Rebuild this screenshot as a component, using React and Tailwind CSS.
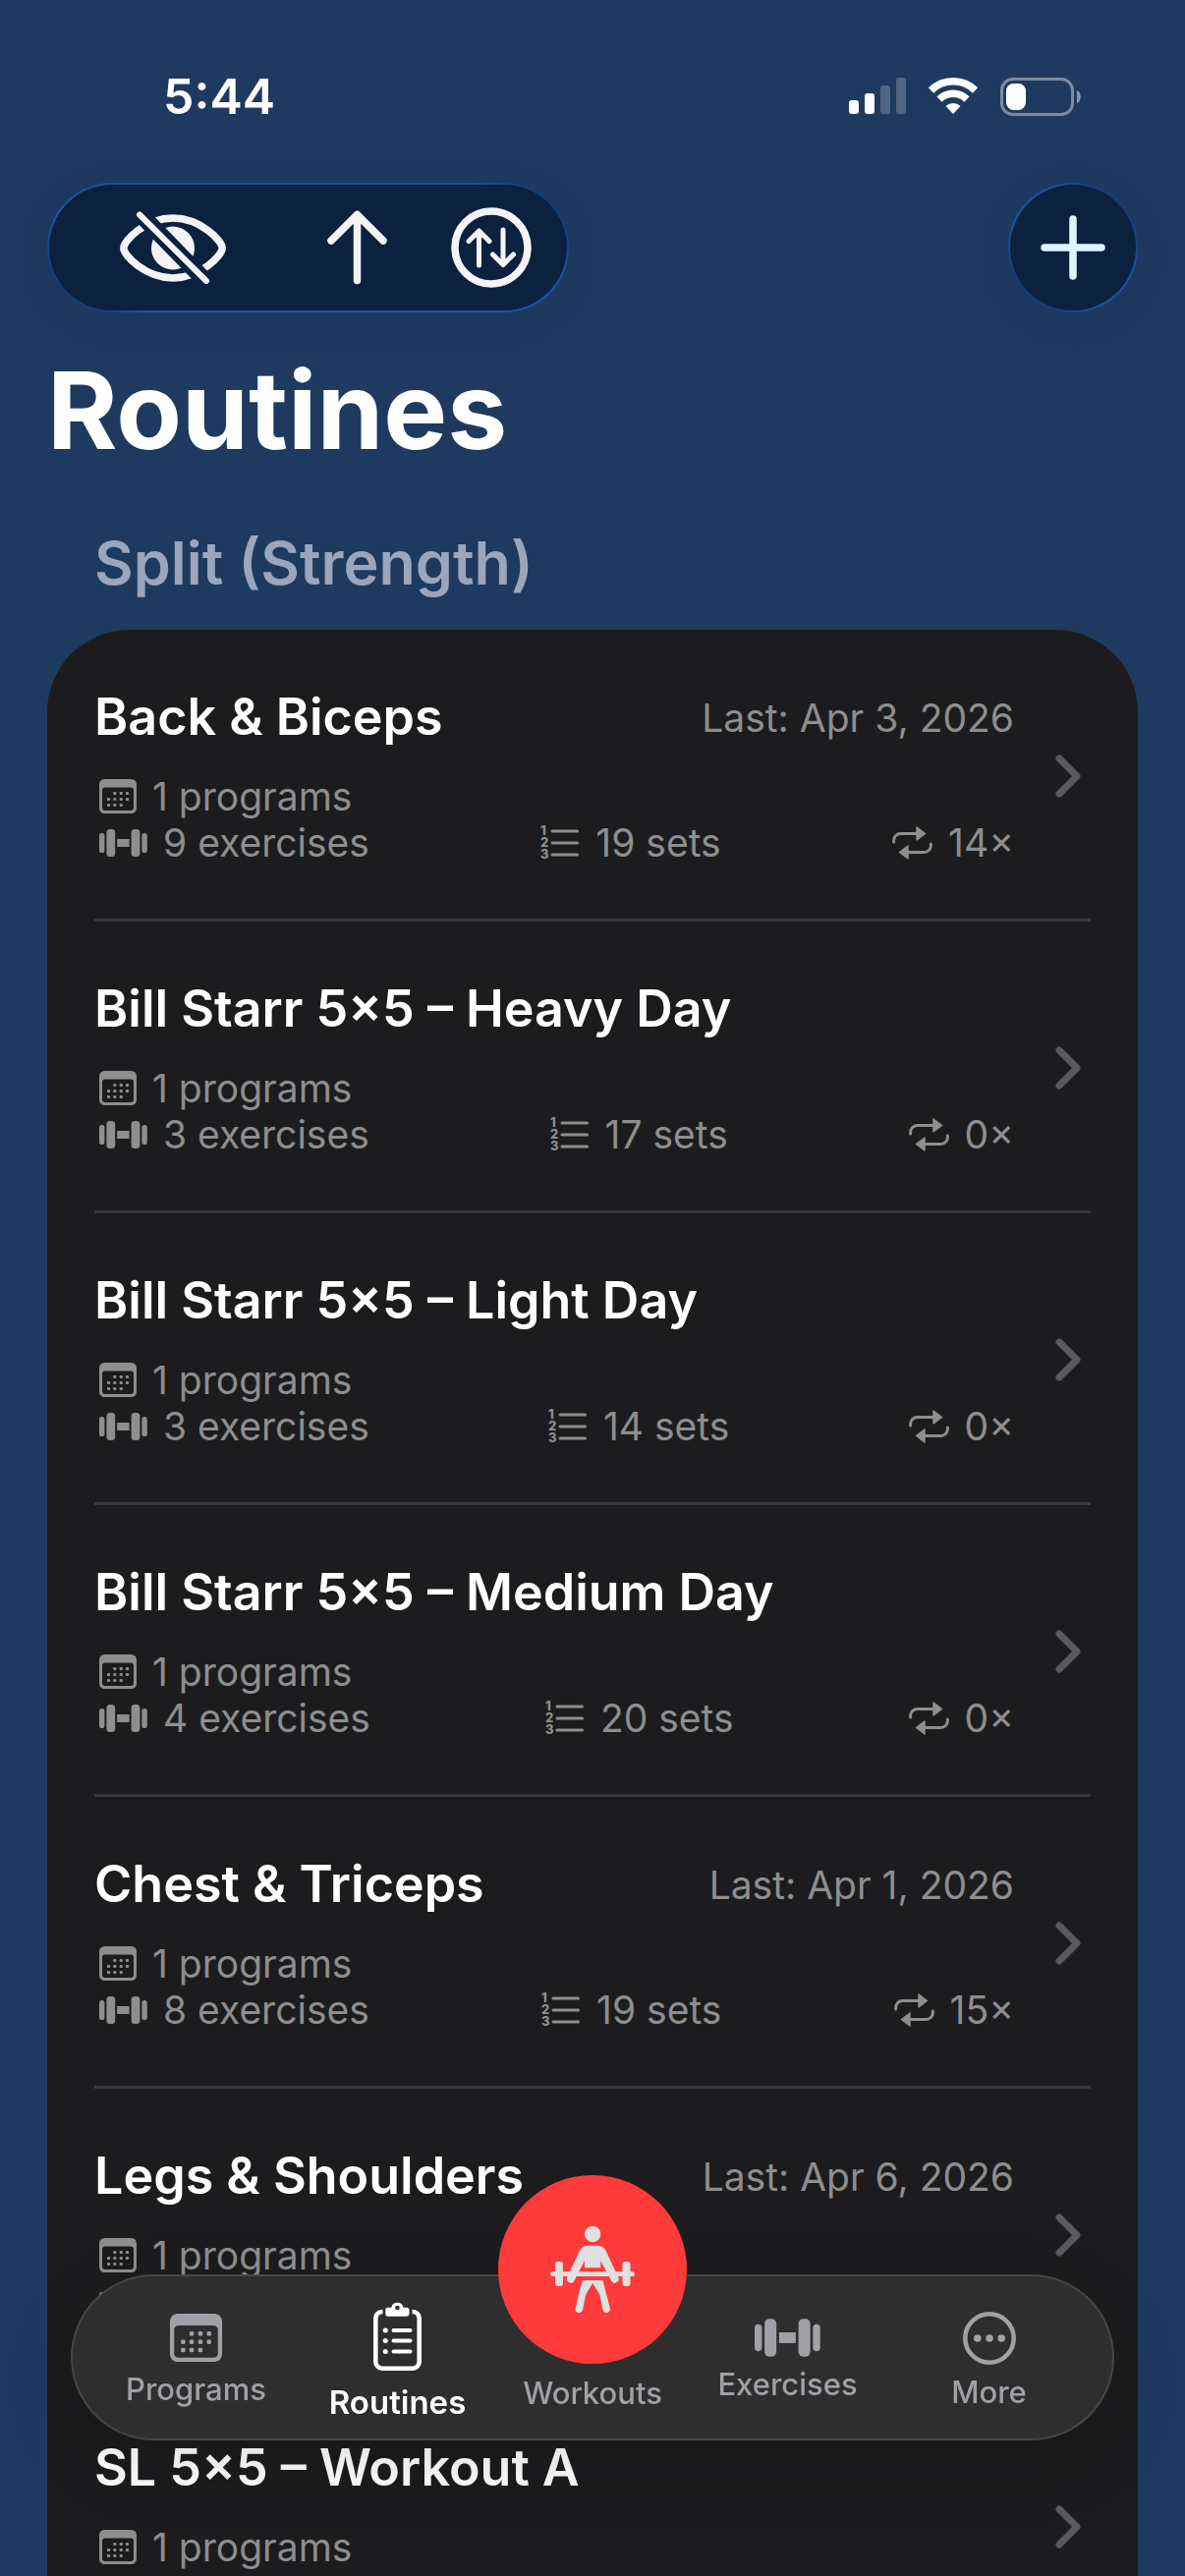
import clsx from 'clsx'

const routines = [
  { name: 'Back & Biceps', last: 'Apr 3, 2026', programs: 1, exercises: 9, sets: 19, done: 14 },
  { name: 'Bill Starr 5×5 – Heavy Day', programs: 1, exercises: 3, sets: 17, done: 0 },
  { name: 'Bill Starr 5×5 – Light Day', programs: 1, exercises: 3, sets: 14, done: 0 },
  { name: 'Bill Starr 5×5 – Medium Day', programs: 1, exercises: 4, sets: 20, done: 0 },
  { name: 'Chest & Triceps', last: 'Apr 1, 2026', programs: 1, exercises: 8, sets: 19, done: 15 },
  { name: 'Legs & Shoulders', last: 'Apr 6, 2026', programs: 1 },
  { name: 'SL 5×5 – Workout A', programs: 1 },
]

function CalendarIcon({ className }) {
  const dots = [
    [15.8, 14.5], [22.2, 14.5], [28.5, 14.5],
    [9.6, 20.5], [15.8, 20.5], [22.2, 20.5], [28.5, 20.5],
    [9.6, 26.5], [15.8, 26.5], [22.2, 26.5],
  ]
  return (
    <svg viewBox="0 0 38 35" className={className} fill="currentColor" aria-hidden="true">
      <path
        fillRule="evenodd"
        d="M5.5 0h27A5.5 5.5 0 0 1 38 5.5v24a5.5 5.5 0 0 1-5.5 5.5h-27A5.5 5.5 0 0 1 0 29.5v-24A5.5 5.5 0 0 1 5.5 0ZM6 8.500a3 3 0 0 0-3 3V29a3 3 0 0 0 3 3h26a3 3 0 0 0 3-3V11.500a3 3 0 0 0-3-3Z"
      />
      {dots.map(([x, y]) => (
        <rect key={`${x}-${y}`} x={x - 1.6} y={y - 1.6} width="3.2" height="3.2" rx="1" />
      ))}
    </svg>
  )
}

function DumbbellIcon({ className }) {
  return (
    <svg viewBox="0 0 49 28" className={className} fill="currentColor" aria-hidden="true">
      <rect x="0" y="4" width="5.4" height="20" rx="2.6" />
      <rect x="7.4" y="0" width="8.8" height="28" rx="3.5" />
      <rect x="18.2" y="10" width="12.4" height="8" />
      <rect x="32.6" y="0" width="8.8" height="28" rx="3.5" />
      <rect x="43.4" y="4" width="5.4" height="20" rx="2.6" />
    </svg>
  )
}

function NumberedListIcon({ className }) {
  return (
    <svg viewBox="0 0 40 34" overflow="visible" className={className} fill="currentColor" aria-hidden="true">
      <g fontFamily="Inter, sans-serif" fontSize="13" fontWeight="800">
        <text x="0" y="9">1</text>
        <text x="0" y="21">2</text>
        <text x="0" y="33">3</text>
      </g>
      <path d="M12 5h25.5M12 17h25.5M12 29h25.5" stroke="currentColor" strokeWidth="3" strokeLinecap="round" />
    </svg>
  )
}

function RepeatIcon({ className }) {
  return (
    <svg viewBox="0 0 41 34" className={className} aria-hidden="true">
      <path
        d="M1.6 16V14.5a7 7 0 0 1 7-7H25M39.4 18V19.5a7 7 0 0 1-7 7H16"
        fill="none"
        stroke="currentColor"
        strokeWidth="3"
        strokeLinecap="round"
      />
      <path
        d="M25 1v13l8.5-6.5ZM16 20v13l-8.5-6.5Z"
        fill="currentColor"
        stroke="currentColor"
        strokeWidth="1.5"
        strokeLinejoin="round"
      />
    </svg>
  )
}

function ChevronIcon() {
  return (
    <svg viewBox="0 0 46 46" className="h-[46px] w-[46px] shrink-0 text-[#5a5a5e]" aria-hidden="true">
      <path d="M14 5l18 18-18 18" fill="none" stroke="currentColor" strokeWidth="7" strokeLinecap="round" strokeLinejoin="round" />
    </svg>
  )
}

function EyeSlashIcon() {
  return (
    <svg viewBox="0 0 108 74" className="h-[74px] w-[108px]" fill="none" aria-hidden="true">
      <path d="M3.8 37.5C3.8 30 26 7 54 7s50.200 23 50.200 30.500S82 68 54 68 3.800 45 3.800 37.500Z" stroke="#f3f4f7" strokeWidth="7.5" />
      <circle cx="54" cy="37.5" r="22" fill="#f3f4f7" />
      <path d="M14-4l80 82" stroke="#0c213d" strokeWidth="17" />
      <path d="M20 3.500l68 67.500" stroke="#f3f4f7" strokeWidth="6" strokeLinecap="round" />
    </svg>
  )
}

function ArrowUpIcon() {
  return (
    <svg viewBox="0 0 61 76" className="h-[76px] w-[61px]" fill="none" aria-hidden="true">
      <path d="M30.5 71.5V4.5M4 31L30.5 4.5 57 31" stroke="#f3f4f7" strokeWidth="7.5" strokeLinecap="round" strokeLinejoin="round" />
    </svg>
  )
}

function SortIcon() {
  return (
    <svg viewBox="0 0 82 82" className="h-[82px] w-[82px]" fill="none" stroke="#f3f4f7" aria-hidden="true">
      <circle cx="41" cy="41" r="37" strokeWidth="7.5" />
      <path
        d="M28.5 59V24M18 34.5L28.5 24 39 34.5M53 23v35M42.5 48L53 58.5 63.5 48"
        strokeWidth="5"
        strokeLinecap="round"
        strokeLinejoin="round"
      />
    </svg>
  )
}

function ClipboardIcon({ className }) {
  return (
    <svg viewBox="0 0 49 70" className={className} fill="none" aria-hidden="true">
      <path
        d="M9.5 10H9a6.700 6.700 0 0 0-6.700 6.700V61A6.700 6.700 0 0 0 9 67.700h31A6.700 6.700 0 0 0 46.700 61V16.700A6.700 6.700 0 0 0 40 10h-.5"
        stroke="currentColor"
        strokeWidth="4.6"
      />
      <path
        fillRule="evenodd"
        d="M18.3 5.8a6.2 6.2 0 0 1 12.2 0H34a2.5 2.5 0 0 1 2.5 2.5v3.7a2.7 2.7 0 0 1-2.7 2.7H15a2.7 2.7 0 0 1-2.7-2.7V8.3A2.5 2.5 0 0 1 14.800 5.800ZM24.400 3.700a2.300 2.300 0 1 0 0 4.600 2.300 2.300 0 0 0 0-4.600Z"
        fill="currentColor"
      />
      <path d="M20.5 29h17M20.5 39.5h17M20.5 50.5h17" stroke="currentColor" strokeWidth="4" strokeLinecap="round" />
      <path d="M12.2 29h.1M12.2 39.5h.1M12.2 50.5h.1" stroke="currentColor" strokeWidth="5" strokeLinecap="round" />
    </svg>
  )
}

function MoreIcon({ className }) {
  return (
    <svg viewBox="0 0 54 54" className={className} aria-hidden="true">
      <circle cx="27" cy="27" r="24.7" fill="none" stroke="currentColor" strokeWidth="4.5" />
      <g fill="currentColor">
        <circle cx="14.8" cy="27" r="3.8" />
        <circle cx="27" cy="27" r="3.8" />
        <circle cx="39.2" cy="27" r="3.8" />
      </g>
    </svg>
  )
}

function LifterIcon() {
  return (
    <svg viewBox="0 0 86 88" className="h-[88px] w-[86px]" fill="#e0e0e0" aria-hidden="true">
      <circle cx="43.2" cy="8" r="8.2" />
      <path d="M39 19.700h8.500q6.500 0 9 5L69 51.500a3.700 3.700 0 0 1-6.800 4.300L51.300 35v7.300H35V35L24.300 55.800a3.700 3.700 0 0 1-6.800-4.300L30 24.700q2.500-5 9-5Z" />
      <path d="M33 55h20.500l3 11.500 4.300 17a3.700 3.700 0 0 1-7.300 1.500L50.300 69.500 43.200 58 36.200 69.500 33 85a3.700 3.700 0 0 1-7.300-1.500L29.500 66.500Z" />
      <path d="M2.400 48.700h81.200" stroke="#e0e0e0" strokeWidth="4.8" strokeLinecap="round" />
      <rect x="5" y="36" width="8" height="25" rx="3" />
      <rect x="73.5" y="36" width="8" height="25" rx="3" />
    </svg>
  )
}

function StatusBar() {
  return (
    <div className="flex h-14 items-center justify-between pr-[58px] pl-[118px]">
      <span className="text-[50px] leading-14 font-semibold">5:44</span>
      <div className="flex items-center gap-[22px]">
        <svg viewBox="0 0 58 38" className="h-[38px] w-[58px]" fill="#fff" aria-hidden="true">
          <rect x="0" y="23" width="10" height="14" rx="3" />
          <rect x="16" y="16" width="10" height="21" rx="3" />
          <rect x="32" y="8" width="10" height="29" rx="3" opacity=".22" />
          <rect x="48" y="0" width="10" height="37" rx="3" opacity=".22" />
        </svg>
        <svg viewBox="0 0 52 38" className="h-[38px] w-[52px]" fill="none" stroke="#fff" aria-hidden="true">
          <path d="M3.5 13a32 32 0 0 1 45 0" strokeWidth="7.5" />
          <path d="M12 22a20 20 0 0 1 28 0" strokeWidth="7.5" />
          <path d="M18.5 29a10.800 10.800 0 0 1 15 0L26 37Z" fill="#fff" stroke="none" />
        </svg>
        <svg viewBox="0 0 82 39" className="h-[39px] w-[82px]" aria-hidden="true">
          <rect x="1.5" y="1.5" width="72" height="36" rx="11.5" fill="none" stroke="#7c8ba2" strokeWidth="3" />
          <path d="M78 13c5 2 5 11 0 13Z" fill="#8a97ab" />
          <rect x="6" y="6" width="20" height="27" rx="7.5" fill="#fff" />
        </svg>
      </div>
    </div>
  )
}

function Toolbar() {
  return (
    <div className="mt-[60px] flex justify-between">
      <div className="rounded-full bg-[linear-gradient(45deg,#0f2c54,#1655a8_15%,#1655a8_85%,#0f2c54)] p-[2px] shadow-[0_8px_50px_rgba(0,0,0,0.03)]">
        <div className="flex h-32 items-center rounded-full bg-[#0c213d] pr-9 pl-[72px]">
          <button type="button" aria-label="Hide routines">
            <EyeSlashIcon />
          </button>
          <button type="button" aria-label="Move up" className="ml-[103px]">
            <ArrowUpIcon />
          </button>
          <button type="button" aria-label="Sort" className="ml-[65px]">
            <SortIcon />
          </button>
        </div>
      </div>
      <button
        type="button"
        aria-label="Add routine"
        className="rounded-full bg-[linear-gradient(45deg,#0f2c54,#1655a8_35%,#1655a8_65%,#0f2c54)] p-[2px] shadow-[0_8px_50px_rgba(0,0,0,0.03)]"
      >
        <span className="grid h-32 w-32 place-items-center rounded-full bg-[#0c213d]">
          <svg viewBox="0 0 66 66" className="h-[66px] w-[66px]" aria-hidden="true">
            <path d="M33 4v58M4 33h58" stroke="#dff5ff" strokeWidth="7.5" strokeLinecap="round" />
          </svg>
        </span>
      </button>
    </div>
  )
}

function RoutineRow({ routine, isLast }) {
  const { name, last, programs, exercises, sets, done } = routine
  return (
    <li className={clsx('mx-12', !isLast && 'border-b-[3px] border-[#38383a]')}>
      <a href="#routine" className="flex items-center gap-8 pt-[57px] pb-[54px]">
        <div className="min-w-0 flex-1 text-[39px] leading-[47px] text-[#8e8e8e]">
          <div className="flex items-center justify-between">
            <h3 className="text-[52px] leading-16 font-semibold text-white">{name}</h3>
            {last && <span>Last: {last}</span>}
          </div>
          <div className="mt-[25px] flex items-center gap-4 pl-[5px]">
            <CalendarIcon className="h-[35px] w-[38px]" />
            {programs} programs
          </div>
          <div className="flex h-[47px] items-center justify-between">
            <div className="flex items-center gap-4 pl-[5px]">
              <DumbbellIcon className="h-7 w-[49px]" />
              {exercises !== undefined && <span>{exercises} exercises</span>}
            </div>
            {sets !== undefined && (
              <div className="flex items-center gap-4">
                <NumberedListIcon className="h-[34px] w-10" />
                {sets} sets
              </div>
            )}
            {done !== undefined && (
              <div className="flex items-center gap-4">
                <RepeatIcon className="h-[34px] w-[41px]" />
                {done}×
              </div>
            )}
          </div>
        </div>
        <ChevronIcon />
      </a>
    </li>
  )
}

function Tab({ label, active, children }) {
  return (
    <button
      type="button"
      aria-current={active ? 'page' : undefined}
      className={clsx(
        'flex flex-1 basis-0 flex-col items-center pt-1.5',
        active ? 'gap-3.5 text-[33px] leading-9 font-semibold text-white' : 'gap-2.5 text-[31px] leading-9 font-medium text-[#a0a0a7]',
      )}
    >
      {children}
      {label}
    </button>
  )
}

function TabBar() {
  return (
    <nav className="fixed inset-x-[72px] bottom-[138px] flex h-[169px] items-center rounded-full border-2 border-[#464647] bg-[#2e2e2e] px-[23px] shadow-[0_24px_70px_rgba(0,0,0,0.14)]">
      <Tab label="Programs">
        <CalendarIcon className="h-[49px] w-[53px]" />
      </Tab>
      <Tab label="Routines" active>
        <ClipboardIcon className="h-[70px] w-[49px]" />
      </Tab>
      <button
        type="button"
        className="flex w-48 shrink-0 flex-col items-center gap-3 self-end pb-7 text-[31px] leading-9 font-medium text-[#a0a0a7]"
      >
        <span className="grid h-48 w-48 place-items-center rounded-full bg-[#ff3a3a]">
          <LifterIcon />
        </span>
        Workouts
      </button>
      <Tab label="Exercises">
        <DumbbellIcon className="h-[39px] w-[67px]" />
      </Tab>
      <Tab label="More">
        <MoreIcon className="h-[54px] w-[54px]" />
      </Tab>
    </nav>
  )
}

export default function App() {
  return (
    <div className="h-screen overflow-hidden bg-[#1e3a5f] px-12 pt-[70px] font-['Inter',sans-serif] text-white">
      <StatusBar />
      <Toolbar />
      <h1 className="mt-[39px] text-[109px] leading-[120px] font-bold">Routines</h1>
      <h2 className="mt-14 px-12 text-[61px] leading-20 font-semibold text-[#9ba5bd]">Split (Strength)</h2>
      <ul className="mt-7 rounded-t-[84px] bg-[#1c1c1e]">
        {routines.map((routine, i) => (
          <RoutineRow key={routine.name} routine={routine} isLast={i === routines.length - 1} />
        ))}
      </ul>
      <TabBar />
    </div>
  )
}
